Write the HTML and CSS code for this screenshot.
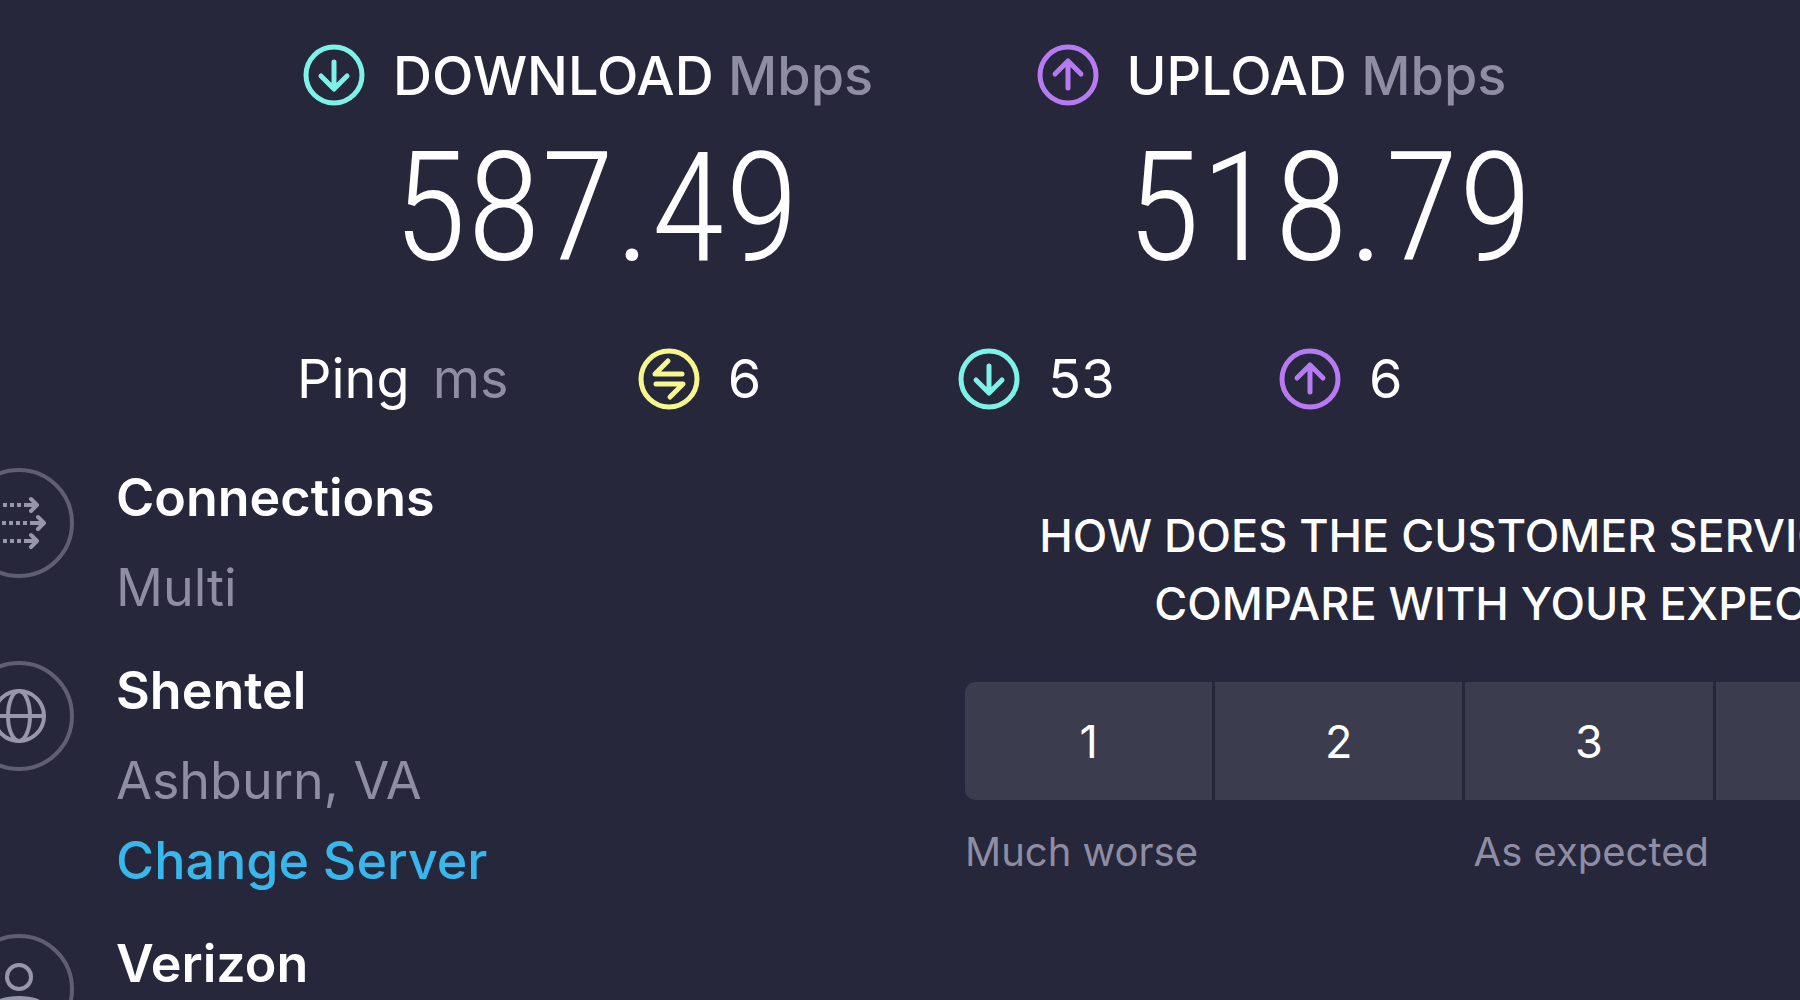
FILE: index.html
```html
<!DOCTYPE html>
<html lang="en">
<head>
    <meta charset="UTF-8">
    <meta name="viewport" content="width=device-width, initial-scale=1.0">
    <title>Speed Test Results</title>
    <link rel="stylesheet" href="styles.css">
</head>
<body>
    <main class="container">
        <section class="results">
            <div class="result">
                <svg class="icon download" viewBox="-31 -31 62 62" aria-hidden="true">
                    <circle r="28" />
                    <path d="M0 -13V13M-13 1L0 14L13 1" />
                </svg>
                <div>
                    <h2>DOWNLOAD <span class="unit">Mbps</span></h2>
                    <p class="speed">587.49</p>
                </div>
            </div>
            <div class="result">
                <svg class="icon upload" viewBox="-31 -31 62 62" aria-hidden="true">
                    <circle r="28" />
                    <path d="M0 13V-13M-13 -1L0 -14L13 -1" />
                </svg>
                <div>
                    <h2>UPLOAD <span class="unit">Mbps</span></h2>
                    <p class="speed">518.79</p>
                </div>
            </div>
        </section>

        <section class="ping">
            <div class="ping-title">Ping <span class="ms">ms</span></div>
            <div class="ping-item">
                <svg class="icon idle" viewBox="-31 -31 62 62" aria-hidden="true">
                    <circle r="28" />
                    <path d="M13 -5H-14L-1 -18M-13 5H14L1 18" />
                </svg>
                <span>6</span>
            </div>
            <div class="ping-item">
                <svg class="icon download" viewBox="-31 -31 62 62" aria-hidden="true">
                    <circle r="28" />
                    <path d="M0 -13V13M-13 1L0 14L13 1" />
                </svg>
                <span>53</span>
            </div>
            <div class="ping-item">
                <svg class="icon upload" viewBox="-31 -31 62 62" aria-hidden="true">
                    <circle r="28" />
                    <path d="M0 13V-13M-13 -1L0 -14L13 -1" />
                </svg>
                <span>6</span>
            </div>
        </section>

        <section class="details">
            <ul class="info">
                <li>
                    <svg class="ring" viewBox="-55 -55 110 110" aria-hidden="true">
                        <circle class="edge" r="53" />
                        <path class="dots" d="M-30 -18H9M-24 0H16M-30 18H9" />
                        <path d="M8 -18H18M12 -24L18 -18L12 -12M15 0H25M19 -6L25 0L19 6M8 18H18M12 12L18 18L12 24" />
                    </svg>
                    <div>
                        <h3>Connections</h3>
                        <p>Multi</p>
                    </div>
                </li>
                <li>
                    <svg class="ring" viewBox="-55 -55 110 110" aria-hidden="true">
                        <circle class="edge" r="53" />
                        <circle r="25" />
                        <ellipse rx="11" ry="25" />
                        <path d="M-25 0H25" />
                    </svg>
                    <div>
                        <h3>Shentel</h3>
                        <p>Ashburn, VA</p>
                        <a href="#">Change Server</a>
                    </div>
                </li>
                <li>
                    <svg class="ring" viewBox="-55 -55 110 110" aria-hidden="true">
                        <circle class="edge" r="53" />
                        <circle cy="-12" r="12" />
                        <path d="M-25 24V20C-25 12 -12 9 0 9S25 12 25 20V24Z" />
                    </svg>
                    <div>
                        <h3>Verizon</h3>
                    </div>
                </li>
            </ul>

            <form class="survey">
                <h4>HOW DOES THE CUSTOMER SERVICE OF VERIZON<br>COMPARE WITH YOUR EXPECTATIONS?</h4>
                <div class="scores">
                    <button type="button">1</button>
                    <button type="button">2</button>
                    <button type="button">3</button>
                    <button type="button">4</button>
                    <button type="button">5</button>
                </div>
                <div class="scale">
                    <span>Much worse</span>
                    <span>As expected</span>
                    <span>Much better</span>
                </div>
            </form>
        </section>
    </main>
</body>
</html>
```
FILE: styles.css
```css
html {
    background-color: #26273b;
}
body {
    margin: 0;
    height: 100vh;
    overflow: hidden;
    font-family: Inter, "Liberation Sans", sans-serif;
    font-size: 52px;
    color: #fff;
}
h2, h3, h4, p, ul {
    margin: 0;
    padding: 0;
    font-size: inherit;
    font-weight: 500;
}
svg {
    flex: none;
    fill: none;
    stroke: currentColor;
    stroke-linecap: round;
    stroke-linejoin: round;
}
.container {
    padding-top: 44px;
}

/* download / upload */
.results {
    display: grid;
    grid-template-columns: 49fr 51fr;
    padding-left: 303px;
}
.result {
    display: flex;
    gap: 28px;
}
.result h2 {
    font-size: 54px;
    line-height: 64px;
    white-space: nowrap;
}
.icon {
    width: 62px;
    height: 62px;
    stroke-width: 5px;
}
.download {
    color: #7df2e6;
}
.upload {
    color: #b87af2;
}
.idle {
    color: #f8f78d;
}
.unit, .ms {
    color: #8f8da4;
}
.speed {
    margin-top: 20px;
    font-family: "Roboto Condensed", Roboto, sans-serif;
    font-size: 152px;
    font-weight: 300;
    line-height: 160px;
}

/* ping */
.ping {
    display: grid;
    grid-template-columns: 17fr 16fr 16fr 26fr;
    margin-top: 58px;
    padding-left: 297px;
    font-size: 54px;
    line-height: 66px;
}
.ms {
    margin-left: 8px;
}
.ping-item {
    display: flex;
    align-items: center;
    gap: 28px;
}

/* connection info and survey */
.details {
    display: grid;
    grid-template-columns: 965px 1fr;
    margin-top: 46px;
}
.info {
    margin-left: -36px;
    list-style: none;
    line-height: 80px;
}
.info li {
    display: flex;
    gap: 42px;
    margin-bottom: 23px;
}
.info h3 {
    margin-bottom: 10px;
    font-weight: 600;
}
.info p {
    color: #8f8da4;
    font-weight: 400;
}
.info a {
    display: block;
    color: #38b7ec;
    text-decoration: none;
}
.ring {
    width: 110px;
    height: 110px;
    margin-top: 10px;
    color: #9896ab;
    stroke-width: 4px;
}
.edge {
    stroke: #5f5e73;
}
.dots {
    stroke-linecap: butt;
    stroke-dasharray: 4 3;
}
.survey {
    width: 1248px;
    margin-top: 44px;
}
.survey h4 {
    font-size: 45px;
    line-height: 68px;
    text-align: center;
    white-space: nowrap;
}
.scores {
    display: grid;
    grid-template-columns: repeat(5, 1fr);
    gap: 3px;
    margin-top: 44px;
    border-radius: 10px;
    overflow: hidden;
}
.scores button {
    height: 118px;
    border: none;
    background-color: #3c3c4f;
    color: #fff;
    font-family: inherit;
    font-size: 45px;
    font-weight: 400;
    cursor: pointer;
}
.scale {
    display: flex;
    justify-content: space-between;
    margin-top: 28px;
    color: #8f8da4;
    font-size: 40px;
    line-height: 48px;
}
```
